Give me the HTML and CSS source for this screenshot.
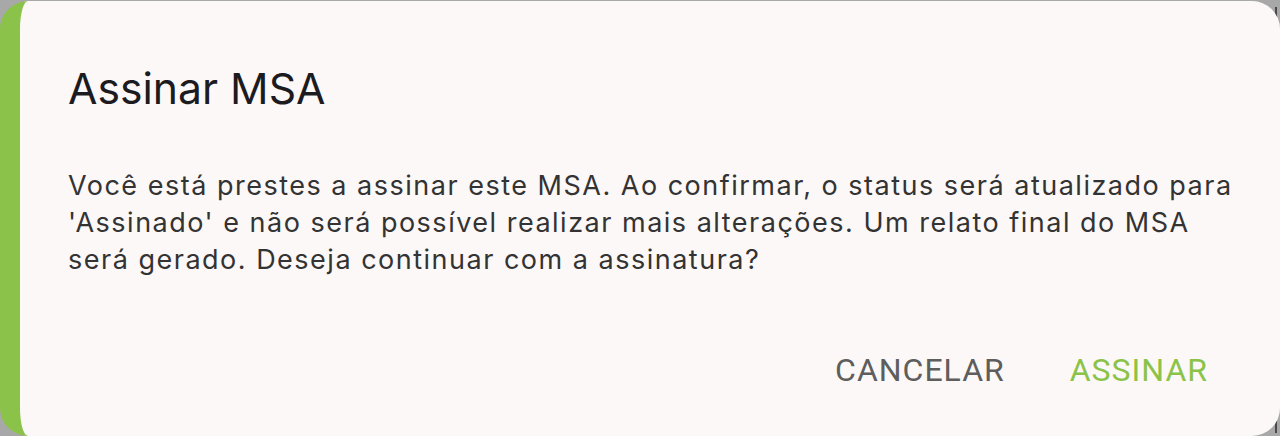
FILE: index.html
```html
<!DOCTYPE html>
<html lang="pt">
<head>
<meta charset="utf-8">
<link rel="stylesheet" href="styles.css">
</head>
<body>
<div class="edge edge-top"></div>
<div class="edge edge-bottom"></div>
<div class="dialog">
  <h2 class="title">Assinar MSA</h2>
  <p class="text">Você está prestes a assinar este MSA. Ao confirmar, o status será atualizado para 'Assinado' e não será possível realizar mais alterações. Um relato final do MSA será gerado. Deseja continuar com a assinatura?</p>
  <div class="actions">
    <button class="btn btn-cancel">CANCELAR</button>
    <button class="btn btn-ok">ASSINAR</button>
  </div>
</div>
</body>
</html>
```

FILE: styles.css
```css
html, body {
  margin: 0;
  padding: 0;
  width: 1280px;
  height: 436px;
  overflow: hidden;
  background: #a8a8a8;
}
body {
  padding-top: 1px;
  box-sizing: border-box;
  position: relative;
}
.edge {
  position: absolute;
  right: 3px;
  width: 2px;
  background: #4a4a4a;
}
.edge-top { top: 7px; height: 11px; }
.edge-bottom { bottom: 3px; height: 12px; }
.dialog {
  position: relative;
  box-sizing: border-box;
  width: 1280px;
  height: 435px;
  background: #fcf8f7;
  border-left: 20px solid #8bc34a;
  border-radius: 28px;
  padding: 62px 40px 0 48px;
  display: flex;
  flex-direction: column;
}
.title {
  margin: 0;
  font-family: Inter, "Noto Sans", sans-serif;
  font-weight: 400;
  font-size: 42.7px;
  line-height: 52px;
  color: #1c1b1f;
}
.text {
  margin: 52px 0 0 0;
  font-family: Inter, "Noto Sans", sans-serif;
  font-weight: 400;
  font-size: 27px;
  line-height: 37px;
  letter-spacing: 1.5px;
  color: #333333;
}
.actions {
  display: flex;
  justify-content: flex-end;
  gap: 65px;
  margin-top: 72px;
  padding-right: 32px;
}
.btn {
  border: none;
  background: none;
  padding: 0;
  font-family: Roboto, "Liberation Sans", sans-serif;
  font-size: 32px;
  font-weight: 400;
  letter-spacing: 1px;
  line-height: 40px;
  cursor: pointer;
}
.btn-cancel { color: #5e5e5e; }
.btn-ok { color: #8bc34a; }
```
